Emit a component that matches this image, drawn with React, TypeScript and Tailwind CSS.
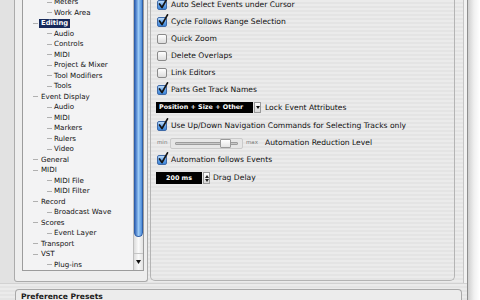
import React from "react";

const stripes =
  "bg-[repeating-linear-gradient(180deg,#ebebeb_0px,#ebebeb_2px,#e4e4e4_2px,#e4e4e4_4px)]";

type Node = { label: string; level: 1 | 2; sel?: boolean };
const tree: Node[] = [
  { label: "Meters", level: 2 },
  { label: "Work Area", level: 2 },
  { label: "Editing", level: 1, sel: true },
  { label: "Audio", level: 2 },
  { label: "Controls", level: 2 },
  { label: "MIDI", level: 2 },
  { label: "Project & Mixer", level: 2 },
  { label: "Tool Modifiers", level: 2 },
  { label: "Tools", level: 2 },
  { label: "Event Display", level: 1 },
  { label: "Audio", level: 2 },
  { label: "MIDI", level: 2 },
  { label: "Markers", level: 2 },
  { label: "Rulers", level: 2 },
  { label: "Video", level: 2 },
  { label: "General", level: 1 },
  { label: "MIDI", level: 1 },
  { label: "MIDI File", level: 2 },
  { label: "MIDI Filter", level: 2 },
  { label: "Record", level: 1 },
  { label: "Broadcast Wave", level: 2 },
  { label: "Scores", level: 1 },
  { label: "Event Layer", level: 2 },
  { label: "Transport", level: 1 },
  { label: "VST", level: 1 },
  { label: "Plug-ins", level: 2 },
];

function Check({ checked }: { checked: boolean }) {
  return (
    <div className="relative w-[10px] h-[10px] shrink-0">
      <div
        className={
          checked
            ? "w-[10px] h-[10px] rounded-[2px] border border-[#3f6aa8] bg-gradient-to-b from-[#bcdcfb] via-[#6aa6ea] to-[#3c85d8]"
            : "w-[10px] h-[10px] rounded-[2px] border border-[#8a8a8a] bg-gradient-to-b from-white to-[#dcdcdc]"
        }
      />
      {checked && (
        <svg
          className="absolute left-[1px] top-[-3px] overflow-visible"
          width="11"
          height="12"
          viewBox="0 0 11 12"
        >
          <path d="M1.5 7 L4 10.5 L9.5 0.8" fill="none" stroke="#151515" strokeWidth="1.7" strokeLinecap="round" strokeLinejoin="round" />
        </svg>
      )}
    </div>
  );
}

const txt = "text-[7.6px] leading-none text-[#111] whitespace-nowrap";

function CheckRow({ label, checked, h }: { label: string; checked: boolean; h: string }) {
  return (
    <div className={`flex items-center gap-[4px] ${h}`}>
      <Check checked={checked} />
      <span className={txt}>{label}</span>
    </div>
  );
}

function Tree() {
  return (
    <div className="flex-1 overflow-hidden">
      <div className="-mt-[3.25px]">
        {tree.map((n, i) => (
          <div
            key={i}
            className={`h-[10.5px] flex items-center ${n.level === 1 ? "pl-[10px]" : "pl-[24px]"}`}
          >
            <div className="w-[5px] h-px bg-[#b0b0b0] shrink-0" />
            {n.sel ? (
              <span className="ml-[1px] px-[2px] h-[9px] leading-[9px] bg-[#17295a] text-white font-bold text-[6.8px] whitespace-nowrap">
                {n.label}
              </span>
            ) : (
              <span
                className={`${n.level === 1 ? "ml-[3px]" : "ml-[2px]"} text-[7.1px] leading-none text-[#111] whitespace-nowrap`}
              >
                {n.label}
              </span>
            )}
          </div>
        ))}
      </div>
    </div>
  );
}

function Scrollbar() {
  return (
    <div className="w-[10px] h-full flex flex-col border-l border-[#bdbdbd] bg-gradient-to-r from-[#dcdcdc] via-[#fafafa] to-[#e2e2e2]">
      <div className="h-[237px] rounded-b-[5px] bg-gradient-to-r from-[#3568bb] via-[#9ccaf5] to-[#4a8ad8] border-x border-b border-[#2f5fa8]" />
      <div className="flex-1" />
      <div className="h-[17px] border-t border-[#c4c4c4] flex items-center justify-center">
        <svg width="5" height="4" viewBox="0 0 5 4">
          <path d="M0 0 L5 0 L2.5 4 Z" fill="#111" />
        </svg>
      </div>
    </div>
  );
}

function LeftGroup() {
  return (
    <div className="w-[134px] h-[282px] shrink-0 border-l border-r border-b border-[#ababab] rounded-b-[3px] bg-[#eeeeee] pl-[7px] pr-[3px] pb-[10px] flex">
      <div className="w-[122px] h-full flex border-l border-r border-b border-[#9c9c9c] bg-[#f3f3f4] overflow-hidden">
        <Tree />
        <Scrollbar />
      </div>
    </div>
  );
}

function RightPanel() {
  return (
    <div className={`w-[305px] h-[281px] shrink-0 border-l border-r border-b border-[#b4b4b4] rounded-b-[5px] overflow-hidden pl-[6px] ${stripes}`}>
      <div className="-mt-[3.5px] flex flex-col">
        <CheckRow h="h-[17px]" checked label="Auto Select Events under Cursor" />
        <CheckRow h="h-[17px]" checked label="Cycle Follows Range Selection" />
        <CheckRow h="h-[17px]" checked={false} label="Quick Zoom" />
        <CheckRow h="h-[17px]" checked={false} label="Delete Overlaps" />
        <CheckRow h="h-[17px]" checked={false} label="Link Editors" />
        <CheckRow h="h-[17px]" checked label="Parts Get Track Names" />
        <div className="h-[18px] flex items-center -ml-[1px]">
          <div className="w-[97px] h-[11px] bg-black flex items-center pl-[3px]">
            <span className="text-[6.4px] font-bold text-white leading-none whitespace-nowrap">Position + Size + Other</span>
          </div>
          <div className="ml-[1px] w-[7px] h-[11px] border border-[#9a9a9a] bg-gradient-to-b from-white to-[#d8d8d8] flex items-center justify-center">
            <svg width="4" height="3" viewBox="0 0 4 3">
              <path d="M0 0 L4 0 L2 3 Z" fill="#111" />
            </svg>
          </div>
          <span className={`ml-[4px] ${txt}`}>Lock Event Attributes</span>
        </div>
        <CheckRow h="h-[18px]" checked label="Use Up/Down Navigation Commands for Selecting Tracks only" />
        <div className="h-[17px] flex items-center">
          <span className="w-[13px] text-[5.5px] text-[#7a7a7a] leading-none">min</span>
          <div className="relative w-[73px] h-[11px] border border-[#cacaca] rounded-[2px] bg-[#e6e6e6] flex items-center px-[4px]">
            <div className="w-full h-[3px] border border-[#9c9c9c] bg-[#c8c8c8] rounded-[1px]" />
            <div className="absolute left-[49px] top-[0px] w-[11px] h-[9px] border border-[#9a9a9a] bg-gradient-to-b from-white to-[#e4e4e4] rounded-[1px]" />
          </div>
          <span className="ml-[3px] w-[16px] text-[5.5px] text-[#7a7a7a] leading-none">max</span>
          <span className={`ml-[3px] ${txt}`}>Automation Reduction Level</span>
        </div>
        <CheckRow h="h-[17px]" checked label="Automation follows Events" />
        <div className="h-[19px] flex items-center -ml-[1px]">
          <div className="w-[46px] h-[12px] bg-black flex items-center justify-center">
            <span className="text-[6.4px] font-bold text-white leading-none">200 ms</span>
          </div>
          <div className="ml-[1px] w-[7px] h-[12px] border border-[#9a9a9a] bg-gradient-to-b from-white to-[#d8d8d8] flex flex-col items-center justify-center gap-[1px]">
            <svg width="4" height="3" viewBox="0 0 4 3">
              <path d="M0 3 L4 3 L2 0 Z" fill="#222" />
            </svg>
            <svg width="4" height="3" viewBox="0 0 4 3">
              <path d="M0 0 L4 0 L2 3 Z" fill="#222" />
            </svg>
          </div>
          <span className={`ml-[3px] ${txt}`}>Drag Delay</span>
        </div>
      </div>
    </div>
  );
}

export default function App() {
  return (
    <div className="w-[480px] h-[300px] overflow-hidden flex bg-white font-['DejaVu_Sans',Verdana,sans-serif]">
      <div className={`w-[468px] h-full shrink-0 flex flex-col border-r border-[#8e8e8e] ${stripes}`}>
        <div className="flex h-[283px] shrink-0">
          <div className="w-[14px] shrink-0 bg-[#e2e2e2]" />
          <LeftGroup />
          <div className="w-[2px] shrink-0" />
          <RightPanel />
          <div className="w-[8px] shrink-0" />
          <div className="w-[4px] shrink-0 border-l border-[#c6c6c6] bg-[#f2f2f2]" />
        </div>
        <div className="flex-1 border-t border-[#d2d2d2] pt-[5px] pl-[15px] pr-[5px]">
          <div className="h-full border-t border-l border-r border-[#a9a9a9] rounded-t-[4px] bg-[#ececec] pl-[5px] pt-[2px]">
            <span className="block text-[7.6px] leading-[9px] text-[#1a1a1a] font-bold whitespace-nowrap">Preference Presets</span>
          </div>
        </div>
      </div>
      <div className="flex-1 bg-gradient-to-r from-[#cfcfcf] via-[#f0f0f0] to-white" />
    </div>
  );
}
